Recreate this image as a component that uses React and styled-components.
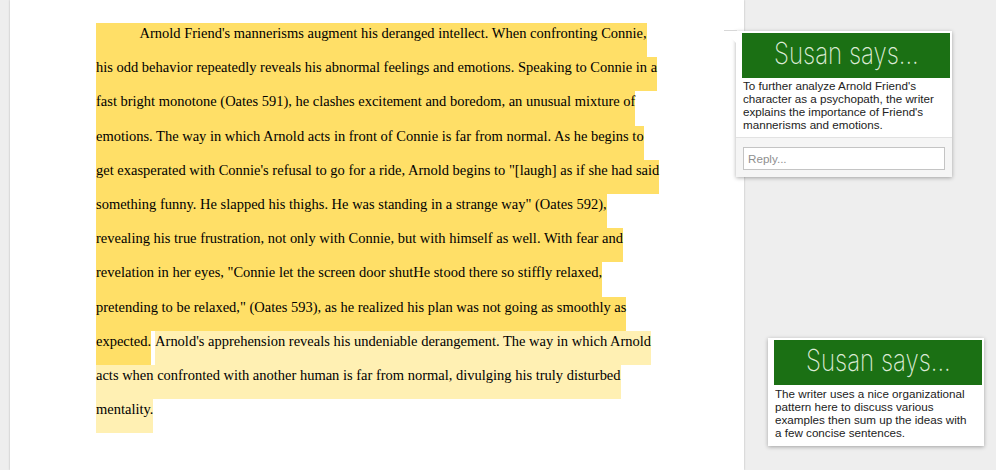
import React from "react";
import styled, { createGlobalStyle } from "styled-components";

const Global = createGlobalStyle`
  html, body { margin: 0; padding: 0; background: #eeeeee; }
  body { width: 996px; height: 470px; overflow: hidden; }
`;

const Page = styled.div`
  display: flex;
  align-items: flex-start;
  height: 470px;
  overflow: hidden;
  background: #eeeeee;
`;

const Sheet = styled.main`
  flex: none;
  box-sizing: border-box;
  width: 734px;
  height: 470px;
  margin-left: 10px;
  padding: 23px 0 0 86px;
  background: #fff;
  box-shadow: 0 0 2px rgba(0, 0, 0, 0.25);
  font: 14.49px/20px "Liberation Serif", "Times New Roman", serif;
  color: #000;
`;

const Line = styled.div`
  display: flex;
  height: 34.2px;
  white-space: pre;
`;

const Mark = styled.span`
  display: block;
  height: 100%;
  background: ${(p) => (p.$light ? "#fff0b3" : "#ffdf67")};
  padding-left: ${(p) => p.$pad || 0}px;
`;

const Gap = styled.span`
  display: block;
  width: 4px;
`;

const Rail = styled.aside`
  flex: none;
  display: flex;
  flex-direction: column;
  width: 252px;
`;

const Card = styled.article`
  position: relative;
  box-sizing: border-box;
  width: 216px;
  margin-top: ${(p) => p.$top}px;
  margin-left: ${(p) => p.$left}px;
  background: #fff;
  box-shadow: 0 1px 4px rgba(0, 0, 0, 0.32);
`;

const Tail = styled.svg`
  position: absolute;
  left: -12px;
  top: -1px;
  width: 13px;
  height: 14px;
`;

const Banner = styled.div`
  display: flex;
  justify-content: center;
  height: 45px;
  margin: 2px 2px 0 6px;
  background: #1b7014;
  overflow: hidden;
`;

const BannerText = styled.span`
  display: inline-block;
  transform: scaleX(0.8);
  color: #dcebd6;
  font: 200 30px/41px "Inter", "Noto Sans", sans-serif;
  white-space: nowrap;
`;

const Body = styled.p`
  margin: 0;
  padding: ${(p) => p.$pad};
  font: 11.65px/13px "Liberation Sans", Arial, sans-serif;
  color: #222;
`;

const Footer = styled.div`
  padding: 9px 7px 7px;
  background: #f5f5f5;
  border-top: 1px solid #e2e2e2;
`;

const Reply = styled.div`
  box-sizing: border-box;
  height: 23px;
  padding-left: 4px;
  background: #fff;
  border: 1px solid #c4c4c4;
  color: #8f8f8f;
  font: 11.65px/22px "Liberation Sans", Arial, sans-serif;
`;

const rows = [
  ["Arnold Friend's mannerisms augment his deranged intellect. When confronting Connie,", 43.5],
  ["his odd behavior repeatedly reveals his abnormal feelings and emotions. Speaking to Connie in a"],
  ["fast bright monotone (Oates 591), he clashes excitement and boredom, an unusual mixture of"],
  ["emotions. The way in which Arnold acts in front of Connie is far from normal. As he begins to"],
  ['get exasperated with Connie\'s refusal to go for a ride, Arnold begins to "[laugh] as if she had said'],
  ['something funny. He slapped his thighs. He was standing in a strange way" (Oates 592),'],
  ["revealing his true frustration, not only with Connie, but with himself as well. With fear and"],
  ['revelation in her eyes, "Connie let the screen door shutHe stood there so stiffly relaxed,'],
  ['pretending to be relaxed," (Oates 593), as he realized his plan was not going as smoothly as'],
];

export default function App() {
  return (
    <Page>
      <Global />
      <Sheet>
        {rows.map(([text, pad]) => (
          <Line key={text}>
            <Mark $pad={pad}>{text}</Mark>
          </Line>
        ))}
        <Line>
          <Mark>expected.</Mark>
          <Gap />
          <Mark $light>Arnold's apprehension reveals his undeniable derangement. The way in which Arnold</Mark>
        </Line>
        <Line>
          <Mark $light>acts when confronted with another human is far from normal, divulging his truly disturbed</Mark>
        </Line>
        <Line>
          <Mark $light>mentality.</Mark>
        </Line>
      </Sheet>
      <Rail>
        <Card $top={31} $left={-8}>
          <Tail viewBox="0 0 13 14" aria-hidden="true">
            <path d="M0 0.5 H13 V14 Z" fill="#fff" />
            <path d="M0 0.5 H13" stroke="#d8d8d8" strokeWidth="1" fill="none" />
          </Tail>
          <Banner>
            <BannerText>Susan says...</BannerText>
          </Banner>
          <Body $pad="1px 6px 6px 7px">
            To further analyze Arnold Friend's
            <br />
            character as a psychopath, the writer
            <br />
            explains the importance of Friend's
            <br />
            mannerisms and emotions.
          </Body>
          <Footer>
            <Reply>Reply...</Reply>
          </Footer>
        </Card>
        <Card $top={161} $left={24}>
          <Banner>
            <BannerText>Susan says...</BannerText>
          </Banner>
          <Body $pad="2px 6px 7px 7px">
            The writer uses a nice organizational
            <br />
            pattern here to discuss various
            <br />
            examples then sum up the ideas with
            <br />a few concise sentences.
          </Body>
        </Card>
      </Rail>
    </Page>
  );
}
